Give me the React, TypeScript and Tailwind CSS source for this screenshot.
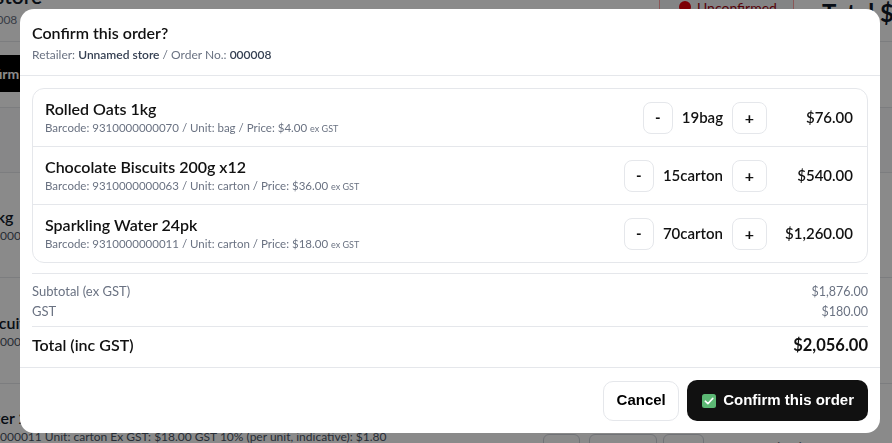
import React from "react";
import clsx from "clsx";

const items = [
  { name: "Rolled Oats 1kg", barcode: "9310000000070", unit: "bag", price: "$4.00", qty: "19bag", total: "$76.00" },
  { name: "Chocolate Biscuits 200g x12", barcode: "9310000000063", unit: "carton", price: "$36.00", qty: "15carton", total: "$540.00" },
  { name: "Sparkling Water 24pk", barcode: "9310000000011", unit: "carton", price: "$18.00", qty: "70carton", total: "$1,260.00" },
];

const bgRows = [
  { name: "Rolled Oats 1kg", sub: "Barcode: 9310000000070 Unit: bag Ex GST: $4.00 GST 10% (per unit, indicative): $0.40", pad: "pt-[34px] h-[105px]" },
  { name: "Chocolate Biscuits 200g x12", sub: "Barcode: 9310000000063 Unit: carton Ex GST: $36.00 GST 10% (per unit, indicative): $3.60", pad: "pt-[35px] h-[106px]" },
  { name: "Sparkling Water 24pk", sub: "Barcode: 9310000000011 Unit: carton Ex GST: $18.00 GST 10% (per unit, indicative): $1.80", pad: "pt-[24px] h-[105px]" },
];

function CheckEmoji() {
  return (
    <svg width="14" height="14" viewBox="0 0 14 14" className="shrink-0">
      <rect x="0" y="0" width="14" height="14" rx="2.5" fill="#5cb874" />
      <path d="M3.3 7.2 L5.9 9.7 L10.8 4.4" fill="none" stroke="#ffffff" strokeWidth="1.6" strokeLinecap="round" strokeLinejoin="round" />
    </svg>
  );
}

function Background() {
  return (
    <div className="-ml-[100px] -mt-[16px] w-[1100px] text-gray-900">
      <div className="flex h-[58px] items-start border-b border-gray-200">
        <div className="w-[759px]">
          <div className="-mt-[2px] whitespace-nowrap text-[21px] font-semibold leading-7">Unnamed store</div>
          <div className="mt-[2px] whitespace-nowrap pl-[17px] text-[12px] leading-4 text-gray-500">Order No.: 000008</div>
        </div>
        <div className="mt-[9px] flex h-[28px] items-center gap-[6px] rounded-md border border-red-300 bg-gray-100 pl-[19px] pr-[16px] text-[14px] text-red-800">
          <span className="h-3 w-3 rounded-full bg-red-600" />
          <span>Unconfirmed</span>
        </div>
        <div className="ml-[28px] mt-[13px] whitespace-nowrap text-[24px] font-bold leading-8">Total $2,056.00</div>
      </div>
      <div className="border-b border-gray-200 pb-[15px] pt-[13px]">
        <div className="ml-[53px] flex h-[37px] w-[140px] items-center rounded-md bg-black px-4 text-[14px] font-bold text-white">
          Confirm order
        </div>
      </div>
      <div className="h-[65px] border-b border-gray-200 bg-gray-50" />
      {bgRows.map((r) => (
        <div key={r.name} className={clsx("flex items-start border-b border-gray-200", r.pad)}>
          <div className="w-[643px] pl-[2px]">
            <div className="whitespace-nowrap text-[16px] font-semibold leading-5">{r.name}</div>
            <div className="mt-px whitespace-nowrap text-[12px] leading-4 text-gray-600">{r.sub}</div>
          </div>
          <div className="mt-[26px] flex items-center">
            <div className="h-8 w-[37px] rounded-md border border-gray-300 bg-white" />
            <div className="ml-[9px] h-8 w-[68px] rounded-md border border-gray-300 bg-white" />
            <div className="ml-[6px] h-8 w-[41px] rounded-md border border-gray-300 bg-white" />
          </div>
          <div className="ml-[58px] mt-[30px] text-[12px] text-gray-500">Unit price</div>
        </div>
      ))}
    </div>
  );
}

export default function App() {
  return (
    <div className="relative h-[443px] w-[892px] overflow-hidden bg-white font-['Lato',sans-serif]">
      <Background />
      <div className="fixed inset-0 bg-black/[0.46] pl-[20px] pt-[9px]">
        <div className="w-[860px] overflow-hidden rounded-[14px] bg-white text-[#111]">
          <div className="border-b border-gray-200 p-3">
            <div className="text-[16px] font-semibold leading-6">Confirm this order?</div>
            <div className="mt-0.5 text-[12px] leading-4 text-gray-500">
              Retailer: <span className="font-semibold text-gray-700">Unnamed store</span> / Order No.:{" "}
              <span className="font-semibold text-gray-700">000008</span>
            </div>
          </div>
          <div className="px-3 pb-[10px] pt-3">
            <div className="rounded-xl border border-gray-200">
              {items.map((it, i) => (
                <div
                  key={it.name}
                  className={clsx("flex h-[57px] items-center pl-3 pr-[14px]", i > 0 && "h-[58px] border-t border-gray-200")}
                >
                  <div className="flex-1">
                    <div className="h-5 text-[16px] font-semibold leading-5">{it.name}</div>
                    <div className="mt-px h-4 text-[11.5px] leading-4 text-gray-500">
                      Barcode: {it.barcode} / Unit: {it.unit} / Price: {it.price}{" "}
                      <span className="text-[9px] leading-none">ex GST</span>
                    </div>
                  </div>
                  <div className="flex items-center gap-[9px]">
                    <button className="flex h-8 w-[30px] items-center justify-center rounded-lg border border-gray-200 bg-white text-[15px] font-bold leading-none">
                      -
                    </button>
                    <span className="text-[15px] font-semibold">{it.qty}</span>
                    <button className="flex h-8 w-[35px] items-center justify-center rounded-lg border border-gray-200 bg-white text-[16px] font-bold leading-none">
                      +
                    </button>
                  </div>
                  <div className="ml-4 min-w-[70px] text-right text-[15px] font-semibold">{it.total}</div>
                </div>
              ))}
            </div>
            <div className="mt-[10px] border-t border-gray-200 pt-2">
              <div className="flex h-5 items-center justify-between text-gray-500">
                <span className="text-[13px]">Subtotal (ex GST)</span>
                <span className="text-[12.5px]">$1,876.00</span>
              </div>
              <div className="flex h-5 items-center justify-between text-gray-500">
                <span className="text-[13px]">GST</span>
                <span className="text-[12.5px]">$180.00</span>
              </div>
              <div className="mt-1 flex h-[31px] items-center justify-between border-t border-gray-200 pt-[6px]">
                <span className="text-[16px] font-semibold leading-6">Total (inc GST)</span>
                <span className="text-[16.5px] font-bold leading-6">$2,056.00</span>
              </div>
            </div>
          </div>
          <div className="flex items-center justify-end gap-2 border-t border-gray-200 px-3 pb-3 pt-[12px]">
            <button className="h-10 w-[76px] rounded-[10px] border border-gray-200 bg-white font-['Liberation_Sans',Arial,sans-serif] text-[15px] font-bold text-black">
              Cancel
            </button>
            <button className="flex h-[41px] items-center gap-[7px] rounded-[10px] bg-[#111] pl-[15px] pr-[14px] font-['Liberation_Sans',Arial,sans-serif] text-[15px] font-bold text-white">
              <CheckEmoji />
              <span>Confirm this order</span>
            </button>
          </div>
        </div>
      </div>
    </div>
  );
}
